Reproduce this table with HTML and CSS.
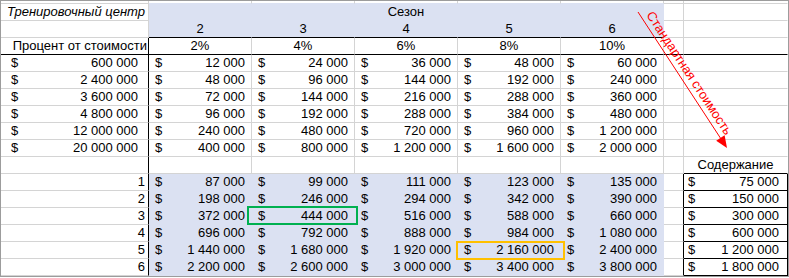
FILE: index.html
```html
<!DOCTYPE html>
<html lang="ru">
<head>
<meta charset="utf-8">
<title>Тренировочный центр</title>
<link rel="stylesheet" href="styles.css">
</head>
<body>
<div class="sheet">
  <div class="grid">
    <!-- row 0 (partial) -->
    <div class="c"></div>
    <div class="c top"></div><div class="c top"></div><div class="c top"></div><div class="c top"></div><div class="c top"></div>
    <div class="c"></div><div class="c h"></div>

    <!-- row 1 -->
    <div class="c it">Тренировочный центр</div>
    <div class="c b ctr span5">Сезон</div>
    <div class="c"></div><div class="c h"></div>

    <!-- row 2 -->
    <div class="c"></div>
    <div class="c b kb ctr">2</div><div class="c b kb ctr">3</div><div class="c b kb ctr">4</div><div class="c b kb ctr">5</div><div class="c b kb ctr">6</div>
    <div class="c"></div><div class="c h"></div>

    <!-- row 3 -->
    <div class="c kr kb rt pr1">Процент от стоимости</div>
    <div class="c kb ctr">2%</div><div class="c kb ctr">4%</div><div class="c kb ctr">6%</div><div class="c kb ctr">8%</div><div class="c kb ctr">10%</div>
    <div class="c kb"></div><div class="c kb h"></div>

    <!-- data rows -->
    <div class="c kr acc pa"><span>$</span><span>600 000</span></div>
    <div class="c acc"><span>$</span><span>12 000</span></div><div class="c acc"><span>$</span><span>24 000</span></div><div class="c acc"><span>$</span><span>36 000</span></div><div class="c acc"><span>$</span><span>48 000</span></div><div class="c acc"><span>$</span><span>60 000</span></div>
    <div class="c"></div><div class="c h"></div>

    <div class="c kr acc pa"><span>$</span><span>2 400 000</span></div>
    <div class="c acc"><span>$</span><span>48 000</span></div><div class="c acc"><span>$</span><span>96 000</span></div><div class="c acc"><span>$</span><span>144 000</span></div><div class="c acc"><span>$</span><span>192 000</span></div><div class="c acc"><span>$</span><span>240 000</span></div>
    <div class="c"></div><div class="c h"></div>

    <div class="c kr acc pa"><span>$</span><span>3 600 000</span></div>
    <div class="c acc"><span>$</span><span>72 000</span></div><div class="c acc"><span>$</span><span>144 000</span></div><div class="c acc"><span>$</span><span>216 000</span></div><div class="c acc"><span>$</span><span>288 000</span></div><div class="c acc"><span>$</span><span>360 000</span></div>
    <div class="c"></div><div class="c h"></div>

    <div class="c kr acc pa"><span>$</span><span>4 800 000</span></div>
    <div class="c acc"><span>$</span><span>96 000</span></div><div class="c acc"><span>$</span><span>192 000</span></div><div class="c acc"><span>$</span><span>288 000</span></div><div class="c acc"><span>$</span><span>384 000</span></div><div class="c acc"><span>$</span><span>480 000</span></div>
    <div class="c"></div><div class="c h"></div>

    <div class="c kr acc pa"><span>$</span><span>12 000 000</span></div>
    <div class="c acc"><span>$</span><span>240 000</span></div><div class="c acc"><span>$</span><span>480 000</span></div><div class="c acc"><span>$</span><span>720 000</span></div><div class="c acc"><span>$</span><span>960 000</span></div><div class="c acc"><span>$</span><span>1 200 000</span></div>
    <div class="c"></div><div class="c h"></div>

    <div class="c kr acc pa"><span>$</span><span>20 000 000</span></div>
    <div class="c acc"><span>$</span><span>400 000</span></div><div class="c acc"><span>$</span><span>800 000</span></div><div class="c acc"><span>$</span><span>1 200 000</span></div><div class="c acc"><span>$</span><span>1 600 000</span></div><div class="c acc"><span>$</span><span>2 000 000</span></div>
    <div class="c"></div><div class="c h"></div>

    <!-- empty row -->
    <div class="c kr"></div>
    <div class="c"></div><div class="c"></div><div class="c"></div><div class="c"></div><div class="c"></div>
    <div class="c"></div><div class="c kb ctr h">Содержание</div>

    <!-- lower block -->
    <div class="c kr rt pn">1</div>
    <div class="c b acc"><span>$</span><span>87 000</span></div><div class="c b acc"><span>$</span><span>99 000</span></div><div class="c b acc"><span>$</span><span>111 000</span></div><div class="c b acc"><span>$</span><span>123 000</span></div><div class="c b acc"><span>$</span><span>135 000</span></div>
    <div class="c kr"></div><div class="c kr kb acc ph"><span>$</span><span>75 000</span></div>

    <div class="c kr rt pn">2</div>
    <div class="c b acc"><span>$</span><span>198 000</span></div><div class="c b acc"><span>$</span><span>246 000</span></div><div class="c b acc"><span>$</span><span>294 000</span></div><div class="c b acc"><span>$</span><span>342 000</span></div><div class="c b acc"><span>$</span><span>390 000</span></div>
    <div class="c kr"></div><div class="c kr kb acc ph"><span>$</span><span>150 000</span></div>

    <div class="c kr rt pn">3</div>
    <div class="c b acc"><span>$</span><span>372 000</span></div><div class="c b acc"><span>$</span><span>444 000</span></div><div class="c b acc"><span>$</span><span>516 000</span></div><div class="c b acc"><span>$</span><span>588 000</span></div><div class="c b acc"><span>$</span><span>660 000</span></div>
    <div class="c kr"></div><div class="c kr kb acc ph"><span>$</span><span>300 000</span></div>

    <div class="c kr rt pn">4</div>
    <div class="c b acc"><span>$</span><span>696 000</span></div><div class="c b acc"><span>$</span><span>792 000</span></div><div class="c b acc"><span>$</span><span>888 000</span></div><div class="c b acc"><span>$</span><span>984 000</span></div><div class="c b acc"><span>$</span><span>1 080 000</span></div>
    <div class="c kr"></div><div class="c kr kb acc ph"><span>$</span><span>600 000</span></div>

    <div class="c kr rt pn">5</div>
    <div class="c b acc"><span>$</span><span>1 440 000</span></div><div class="c b acc"><span>$</span><span>1 680 000</span></div><div class="c b acc"><span>$</span><span>1 920 000</span></div><div class="c b acc"><span>$</span><span>2 160 000</span></div><div class="c b acc"><span>$</span><span>2 400 000</span></div>
    <div class="c kr"></div><div class="c kr kb acc ph"><span>$</span><span>1 200 000</span></div>

    <div class="c kr rt pn">6</div>
    <div class="c b acc"><span>$</span><span>2 200 000</span></div><div class="c b acc"><span>$</span><span>2 600 000</span></div><div class="c b acc"><span>$</span><span>3 000 000</span></div><div class="c b acc"><span>$</span><span>3 400 000</span></div><div class="c b acc"><span>$</span><span>3 800 000</span></div>
    <div class="c kr"></div><div class="c kr kb acc ph"><span>$</span><span>1 800 000</span></div>
  </div>

  <div class="mark mark-green"></div>
  <div class="mark mark-orange"></div>

  <svg class="arrow" width="789" height="278" viewBox="0 0 789 278">
    <line x1="638" y1="12" x2="720.4" y2="138" class="arrow-line"/>
    <polygon points="727,148 724.6,135.3 716.2,140.7" class="arrow-head"/>
    <text x="646" y="15" transform="rotate(56.7 646 15)" class="arrow-text">Стандартная стоимость</text>
  </svg>
</div>
</body>
</html>
```

FILE: styles.css
```css
html, body {
  margin: 0;
  padding: 0;
  background: #ffffff;
}

.sheet {
  position: relative;
  width: 789px;
  height: 277px;
  box-sizing: border-box;
  border: 1px solid #9c9c9c;
  background: #ffffff;
  overflow: hidden;
  font-family: "Liberation Sans", Arial, sans-serif;
  font-size: 13px;
  color: #000000;
}

.grid {
  display: grid;
  grid-template-columns: 148px repeat(5, 103px) 20px 104px;
  grid-template-rows: 3px repeat(16, 17px);
}

.c {
  box-sizing: border-box;
  border-right: 1px solid #d4d4d4;
  border-bottom: 1px solid #d4d4d4;
  line-height: 16px;
  white-space: nowrap;
  overflow: hidden;
}

.h { border-right-color: #ffffff; }

.top { border-bottom-color: #dbe1f2; }

.b {
  background: #dbe1f2;
  border-right-color: #dbe1f2;
  border-bottom-color: #dbe1f2;
}

.kb { border-bottom-color: #000000; }
.kr { border-right-color: #000000; }

.span5 { grid-column: span 5; }

.ctr { text-align: center; }
.rt { text-align: right; }
.it { font-style: italic; padding-left: 6px; }
.pr1 { padding-right: 1px; }
.pn { padding-right: 3px; }

.acc {
  display: flex;
  justify-content: space-between;
  padding: 0 6px;
}
.pa { padding: 0 10px; }
.ph { padding: 0 8px 0 4px; }

.mark {
  position: absolute;
  box-sizing: border-box;
  border: 2px solid;
}
.mark-green {
  left: 246px;
  top: 205px;
  width: 111px;
  height: 19px;
  border-color: #00b050;
}
.mark-orange {
  left: 455px;
  top: 240px;
  width: 109px;
  height: 19px;
  border-color: #ffc000;
}

.arrow {
  position: absolute;
  left: -1px;
  top: -1px;
  pointer-events: none;
}
.arrow-line {
  stroke: #ff0000;
  stroke-width: 1;
}
.arrow-head { fill: #ff0000; }
.arrow-text {
  fill: #ff0000;
  font-family: "Liberation Sans", Arial, sans-serif;
  font-size: 13px;
}
```
